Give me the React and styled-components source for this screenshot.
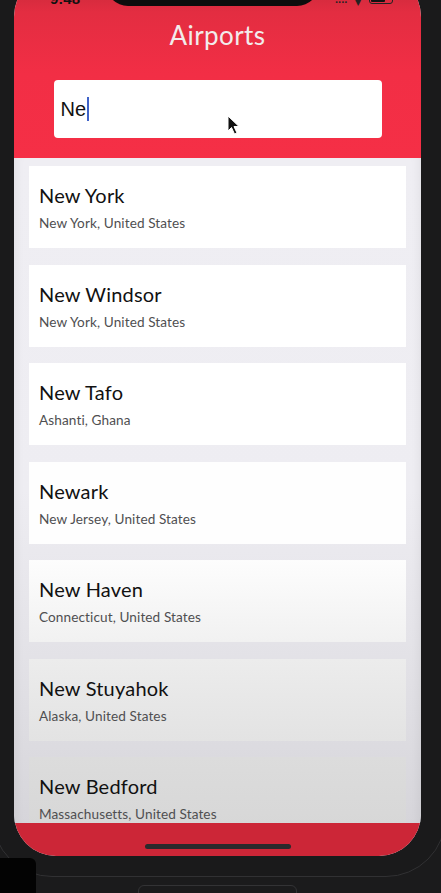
import React from 'react';
import styled, {createGlobalStyle} from 'styled-components';

const GlobalStyle = createGlobalStyle`
  html, body {
    margin: 0;
    padding: 0;
    background: #1b1b1c;
    overflow: hidden;
  }
  body {
    font-family: Lato, "Open Sans", sans-serif;
    height: 893px;
  }
`;

const Page = styled.div`
  position: relative;
  height: 893px;
  overflow: hidden;
`;

const Frame = styled.div`
  margin-left: -8px;
  margin-top: -40px;
  width: 419px;
  padding: 10px 12px 20px 21px;
  border: 1px solid #313133;
  border-radius: 60px;
  background: #1a1a1b;
`;

const Screen = styled.div`
  width: 407px;
  height: 885px;
  border-radius: 46px 46px 42px 42px;
  overflow: hidden;
  display: flex;
  flex-direction: column;
  background: #efeef3;
`;

const Header = styled.div`
  background: linear-gradient(180deg, #bd2737 0%, #e32d41 22%, #f22e45 55%, #f52f46 100%);
  display: flex;
  flex-direction: column;
  align-items: center;
  padding-bottom: 20px;
`;

const StatusBar = styled.div`
  width: 100%;
  height: 35px;
  display: flex;
  justify-content: space-between;
  align-items: flex-end;
`;

const Time = styled.span`
  margin-left: 36px;
  font-family: "Liberation Sans", sans-serif;
  font-size: 15px;
  font-weight: 700;
  color: #111;
  line-height: 14px;
  width: 40px;
`;

const Notch = styled.div`
  width: 213px;
  height: 35px;
  background: #0d0d0d;
  border-radius: 0 0 22px 22px;
`;

const Icons = styled.div`
  width: 64px;
  margin-right: 22px;
  height: 6px;
  display: flex;
  align-items: flex-end;
  gap: 8px;
  overflow: hidden;
`;

const Glyph = styled.span`
  color: #222;
  font-size: 12px;
  line-height: 8px;
`;

const Battery = styled.div`
  width: 24px;
  height: 11px;
  border: 1.5px solid #222;
  border-radius: 3px;
  box-sizing: border-box;
  padding: 1px;
  margin-bottom: 2px;
  &::after {
    content: '';
    display: block;
    width: 70%;
    height: 100%;
    background: #111;
    border-radius: 1px;
  }
`;

const Title = styled.h1`
  margin: 12px 0 0;
  font-weight: 400;
  font-size: 26px;
  line-height: 34px;
  color: #f2ecec;
  letter-spacing: 0.4px;
`;

const Search = styled.div`
  position: relative;
  margin-top: 28px;
  width: 328px;
  height: 58px;
  background: #fff;
  border-radius: 4px;
  box-sizing: border-box;
  padding-left: 7px;
  display: flex;
  align-items: center;
  font-family: "Liberation Sans", Arial, sans-serif;
  font-size: 20px;
  color: #111;
`;

const Caret = styled.span`
  display: inline-block;
  width: 2px;
  height: 24px;
  background: #3f63c8;
  margin-left: 1px;
`;

const Pointer = styled.svg`
  position: absolute;
  left: 173px;
  top: 35px;
`;

const List = styled.div`
  flex: 1;
  display: flex;
  flex-direction: column;
  gap: 16.5px;
  padding: 8px 15px 0;
  overflow: hidden;
  background: linear-gradient(180deg, #efeef3 0%, #eeedf2 50%, #e3e2e7 75%, #d6d5da 100%);
  box-shadow: inset 10px 0 12px -10px rgba(0, 0, 0, 0.08), inset -10px 0 12px -10px rgba(0, 0, 0, 0.08);
`;

const Card = styled.div`
  flex-shrink: 0;
  height: 82px;
  box-sizing: border-box;
  padding: 15px 10px 0;
  background: ${(p) => p.$bg};
`;

const City = styled.div`
  font-size: 20px;
  line-height: 28px;
  color: #111;
  letter-spacing: 0.2px;
`;

const Region = styled.div`
  margin-top: 5px;
  font-size: 13.6px;
  line-height: 18px;
  color: #4f4f51;
  letter-spacing: 0.1px;
`;

const Footer = styled.div`
  height: 33px;
  flex-shrink: 0;
  background: #cc2637;
  display: flex;
  justify-content: center;
  align-items: flex-start;
`;

const HomeBar = styled.div`
  margin-top: 21px;
  width: 146px;
  height: 5px;
  border-radius: 3px;
  background: #2a2a2c;
`;

const Thumb = styled.div`
  position: absolute;
  left: 0;
  top: 858px;
  width: 36px;
  height: 40px;
  border-radius: 0 6px 0 0;
  background: #030303;
`;

const Dock = styled.div`
  position: absolute;
  left: 138px;
  top: 885px;
  width: 157px;
  height: 20px;
  border: 1px solid #333335;
  border-radius: 6px;
`;

const airports = [
  ['New York', 'New York, United States', '#ffffff'],
  ['New Windsor', 'New York, United States', '#ffffff'],
  ['New Tafo', 'Ashanti, Ghana', '#ffffff'],
  ['Newark', 'New Jersey, United States', '#fefefe'],
  ['New Haven', 'Connecticut, United States', 'linear-gradient(180deg, #fdfdfd, #f1f1f1)'],
  ['New Stuyahok', 'Alaska, United States', 'linear-gradient(180deg, #ececec, #e3e3e3)'],
  ['New Bedford', 'Massachusetts, United States', 'linear-gradient(180deg, #dcdcdc, #d6d6d6)'],
];

export default function App() {
  return (
    <Page>
      <GlobalStyle />
      <Frame>
        <Screen>
          <Header>
            <StatusBar>
              <Time>9:48</Time>
              <Notch />
              <Icons>
                <Glyph>····</Glyph>
                <Glyph>▾</Glyph>
                <Battery />
              </Icons>
            </StatusBar>
            <Title>Airports</Title>
            <Search>
              Ne<Caret />
              <Pointer width="14" height="20" viewBox="0 0 14 20">
                <path d="M1 1 L1 16 L4.5 12.5 L7.5 19 L10 18 L7 11.5 L12 11.5 Z" fill="#111" stroke="#fff" strokeWidth="1" />
              </Pointer>
            </Search>
          </Header>
          <List>
            {airports.map(([city, region, bg]) => (
              <Card key={city} $bg={bg}>
                <City>{city}</City>
                <Region>{region}</Region>
              </Card>
            ))}
          </List>
          <Footer>
            <HomeBar />
          </Footer>
        </Screen>
      </Frame>
      <Thumb />
      <Dock />
    </Page>
  );
}
